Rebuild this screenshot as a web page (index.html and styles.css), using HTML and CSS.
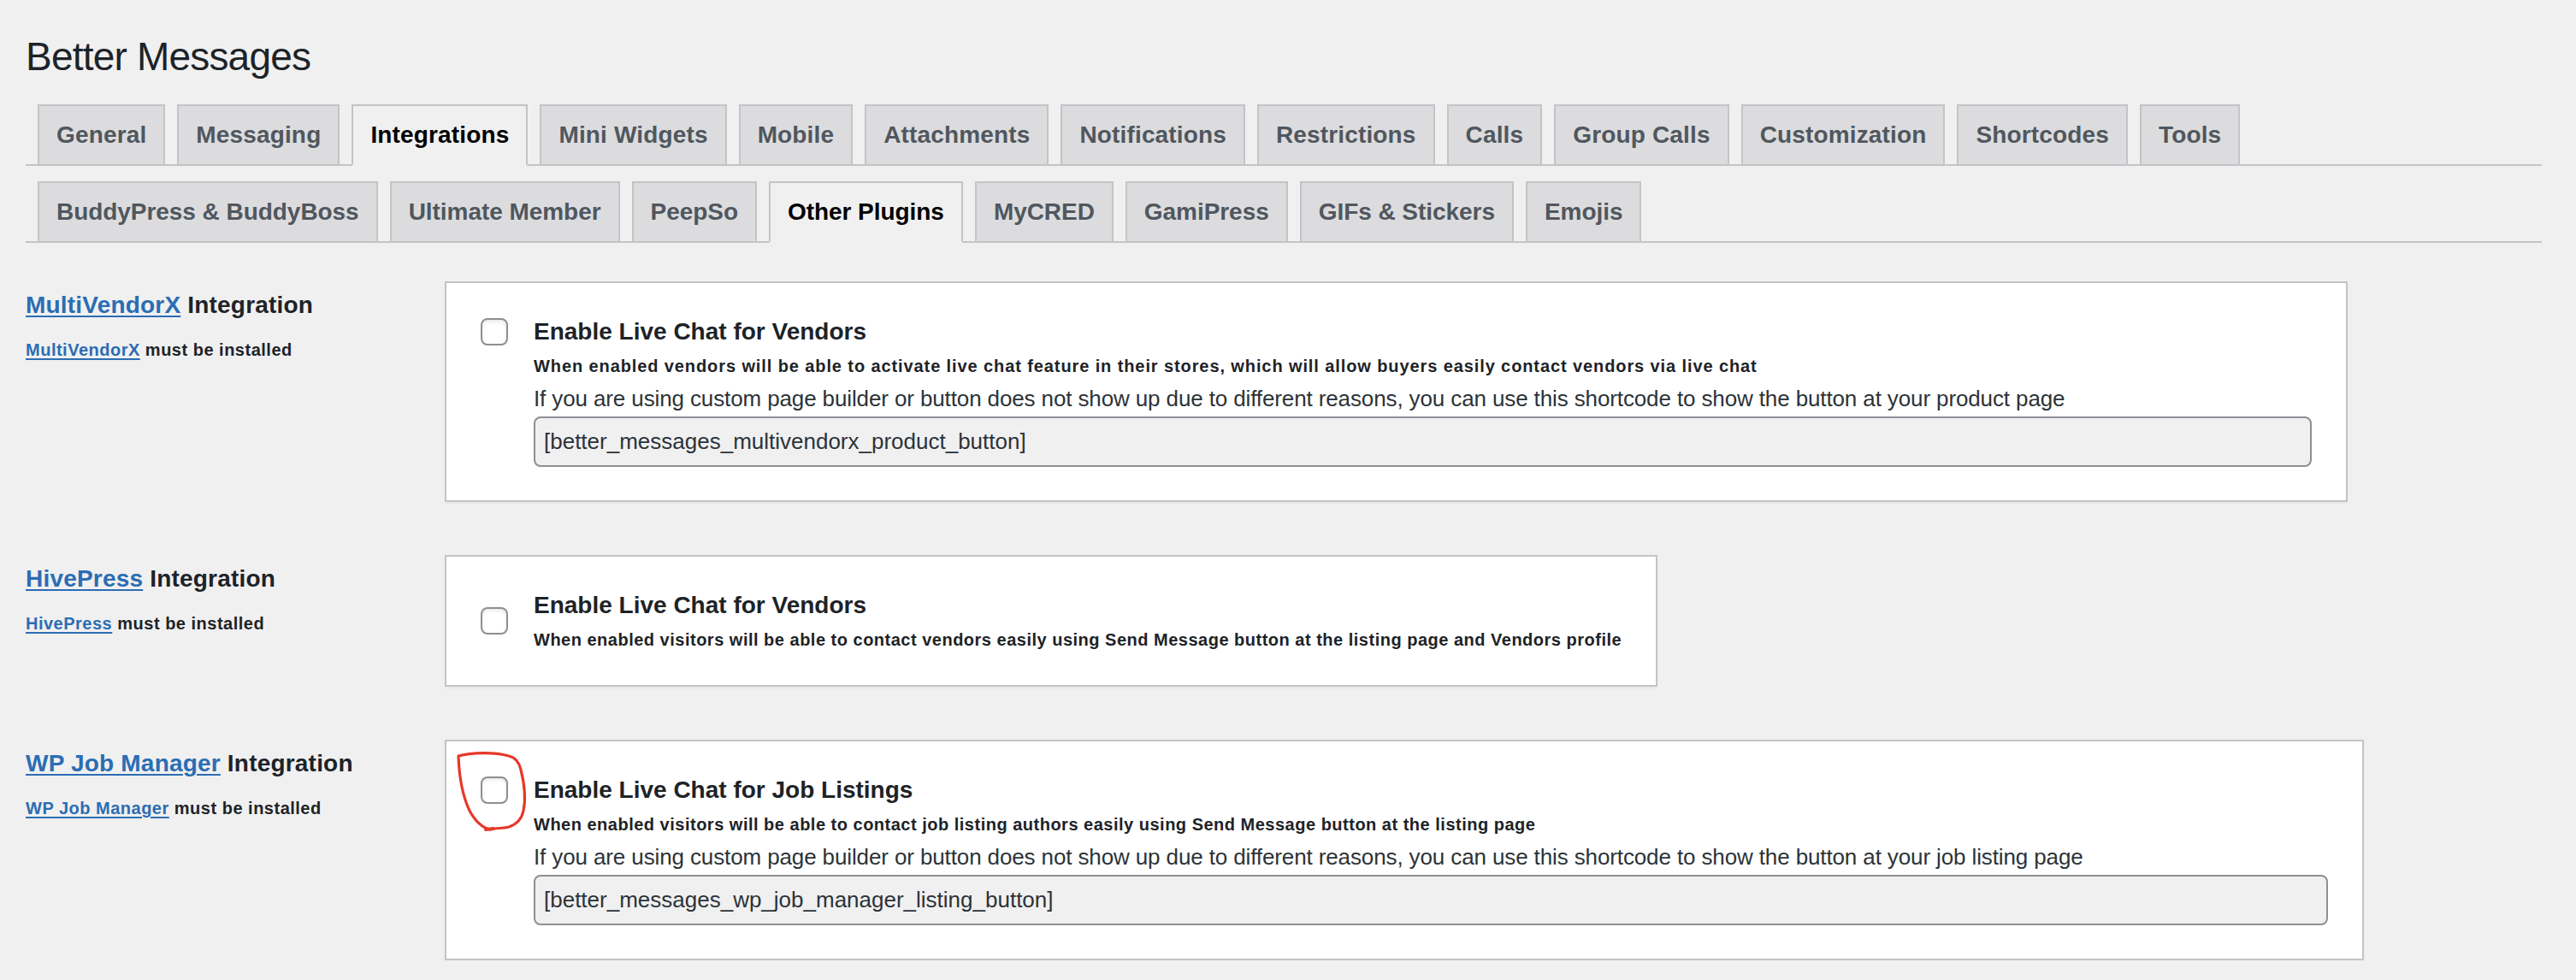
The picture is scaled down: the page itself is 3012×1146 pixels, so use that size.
FILE: index.html
```html
<!DOCTYPE html>
<html lang="en">
<head>
<meta charset="utf-8">
<title>Better Messages</title>
<link rel="stylesheet" href="styles.css">
</head>
<body>
<div class="wrap">
  <h1 class="page-title">Better Messages</h1>

  <nav class="nav-tabs">
    <a class="nav-tab" href="#">General</a>
    <a class="nav-tab" href="#">Messaging</a>
    <a class="nav-tab nav-tab--active" href="#">Integrations</a>
    <a class="nav-tab" href="#">Mini Widgets</a>
    <a class="nav-tab" href="#">Mobile</a>
    <a class="nav-tab" href="#">Attachments</a>
    <a class="nav-tab" href="#">Notifications</a>
    <a class="nav-tab" href="#">Restrictions</a>
    <a class="nav-tab" href="#">Calls</a>
    <a class="nav-tab" href="#">Group Calls</a>
    <a class="nav-tab" href="#">Customization</a>
    <a class="nav-tab" href="#">Shortcodes</a>
    <a class="nav-tab" href="#">Tools</a>
  </nav>

  <nav class="nav-tabs nav-tabs--sub">
    <a class="nav-tab" href="#">BuddyPress &amp; BuddyBoss</a>
    <a class="nav-tab" href="#">Ultimate Member</a>
    <a class="nav-tab" href="#">PeepSo</a>
    <a class="nav-tab nav-tab--active" href="#">Other Plugins</a>
    <a class="nav-tab" href="#">MyCRED</a>
    <a class="nav-tab" href="#">GamiPress</a>
    <a class="nav-tab" href="#">GIFs &amp; Stickers</a>
    <a class="nav-tab" href="#">Emojis</a>
  </nav>

  <div class="settings">
    <section class="integration">
      <div class="integration-label">
        <h2 class="integration-title"><a class="link" href="#">MultiVendorX</a> Integration</h2>
        <p class="integration-req"><a class="link" href="#">MultiVendorX</a> must be installed</p>
      </div>
      <div class="card">
        <div class="option">
          <input class="checkbox" type="checkbox" aria-label="Enable Live Chat for Vendors">
          <div class="option-body">
            <h3 class="option-title">Enable Live Chat for Vendors</h3>
            <p class="option-desc option-desc--loose">When enabled vendors will be able to activate live chat feature in their stores, which will allow buyers easily contact vendors via live chat</p>
            <p class="option-note">If you are using custom page builder or button does not show up due to different reasons, you can use this shortcode to show the button at your product page</p>
            <input class="shortcode shortcode--product" type="text" readonly value="[better_messages_multivendorx_product_button]">
          </div>
        </div>
      </div>
    </section>

    <section class="integration">
      <div class="integration-label">
        <h2 class="integration-title"><a class="link" href="#">HivePress</a> Integration</h2>
        <p class="integration-req"><a class="link" href="#">HivePress</a> must be installed</p>
      </div>
      <div class="card">
        <div class="option option--centered">
          <input class="checkbox" type="checkbox" aria-label="Enable Live Chat for Vendors">
          <div class="option-body">
            <h3 class="option-title">Enable Live Chat for Vendors</h3>
            <p class="option-desc">When enabled visitors will be able to contact vendors easily using Send Message button at the listing page and Vendors profile</p>
          </div>
        </div>
      </div>
    </section>

    <section class="integration">
      <div class="integration-label">
        <h2 class="integration-title"><a class="link" href="#">WP Job Manager</a> Integration</h2>
        <p class="integration-req"><a class="link" href="#">WP Job Manager</a> must be installed</p>
      </div>
      <div class="card">
        <div class="option">
          <input class="checkbox" type="checkbox" aria-label="Enable Live Chat for Job Listings">
          <div class="option-body">
            <h3 class="option-title">Enable Live Chat for Job Listings</h3>
            <p class="option-desc">When enabled visitors will be able to contact job listing authors easily using Send Message button at the listing page</p>
            <p class="option-note">If you are using custom page builder or button does not show up due to different reasons, you can use this shortcode to show the button at your job listing page</p>
            <input class="shortcode shortcode--job" type="text" readonly value="[better_messages_wp_job_manager_listing_button]">
          </div>
        </div>
        <svg class="annotation" viewBox="0 0 92 100" width="92" height="100" aria-hidden="true">
          <path d="M7 8 C22 4, 48 3, 66 8 C74 10, 78 15, 80 24 C84 40, 86 58, 83 72 C81 82, 75 88, 66 91 C58 93, 50 92, 44 94 C36 92, 27 85, 20 72 C13 57, 8 38, 7 8" fill="none" stroke="#e5392a" stroke-width="3.2" stroke-linecap="round" stroke-linejoin="round"/>
          <path d="M39 94 L48 93" fill="none" stroke="#e5392a" stroke-width="4" stroke-linecap="round"/>
        </svg>
      </div>
    </section>
  </div>
</div>
</body>
</html>
```

FILE: styles.css
```css
* {
  box-sizing: border-box;
}

html,
body {
  margin: 0;
  background: #f0f0f1;
}

body {
  font-family: "Liberation Sans", Arial, sans-serif;
  color: #1d2327;
}

.wrap {
  padding: 18px 40px 0 30px;
}

.page-title {
  margin: 0;
  padding: 18px 0 8px;
  font-size: 46px;
  line-height: 60px;
  font-weight: 400;
  letter-spacing: -0.8px;
  color: #1d2327;
}

/* Tabs */
.nav-tabs {
  display: flex;
  align-items: flex-end;
  padding-top: 18px;
  border-bottom: 2px solid #c3c4c7;
}

.nav-tab {
  margin-left: 14px;
  padding: 10px 20px;
  border: 2px solid #c3c4c7;
  border-bottom: 0;
  background: #dcdcde;
  color: #50575e;
  font-size: 28px;
  line-height: 48px;
  font-weight: 700;
  letter-spacing: 0.15px;
  text-decoration: none;
  white-space: nowrap;
}

.nav-tabs--sub .nav-tab {
  letter-spacing: -0.05px;
}

.nav-tab--active {
  background: #f0f0f1;
  color: #000;
  border-bottom: 2px solid #f0f0f1;
  margin-bottom: -2px;
}

/* Settings */
.settings {
  display: flex;
  flex-direction: column;
  gap: 62px;
  padding-top: 45px;
}

.integration {
  display: flex;
  align-items: flex-start;
}

.integration-label {
  flex: 0 0 490px;
  padding-top: 10px;
}

.integration-title {
  margin: 0;
  font-size: 28px;
  line-height: 36px;
  font-weight: 700;
  letter-spacing: 0.2px;
  color: #1d2327;
}

.integration-req {
  margin: 20px 0 0;
  font-size: 20px;
  line-height: 28px;
  font-weight: 700;
  letter-spacing: 0.5px;
  color: #1d2327;
}

.link {
  color: #2b6db3;
  text-decoration: underline;
  text-decoration-thickness: 2px;
  text-underline-offset: 3px;
}

.card {
  position: relative;
  background: #fff;
  border: 2px solid #c3c4c7;
  box-shadow: 0 2px 2px rgba(0, 0, 0, 0.04);
  padding: 39px 40px;
}

.option {
  display: flex;
  align-items: flex-start;
  gap: 30px;
}

.checkbox {
  appearance: none;
  -webkit-appearance: none;
  flex: none;
  width: 32px;
  height: 32px;
  margin: 2px 0 0;
  border: 2px solid #8c8f94;
  border-radius: 8px;
  background: #fff;
  box-shadow: inset 0 2px 4px rgba(0, 0, 0, 0.1);
}

.option--centered .checkbox {
  align-self: center;
  margin-top: 0;
}

.option-title {
  margin: 0;
  font-size: 28px;
  line-height: 36px;
  font-weight: 700;
  color: #1d2327;
}

.option-desc {
  margin: 8px 0 0;
  font-size: 20px;
  line-height: 28px;
  font-weight: 700;
  letter-spacing: 0.5px;
  color: #1d2327;
}

.option-desc--loose {
  letter-spacing: 0.9px;
}

.option-note {
  margin: 6px 0 0;
  font-size: 26px;
  line-height: 36px;
  letter-spacing: -0.12px;
  color: #2c3338;
}

.shortcode {
  display: block;
  margin: 3px 0 0;
  height: 59px;
  padding: 0 10px;
  border: 2px solid #8c8f94;
  border-radius: 8px;
  background: #f0f0f1;
  font-family: "Liberation Sans", Arial, sans-serif;
  font-size: 26px;
  color: #2c3338;
}

.shortcode--product {
  width: 2079px;
}

.shortcode--job {
  width: 2098px;
}

.annotation {
  position: absolute;
  left: 7px;
  top: 9px;
  pointer-events: none;
}
```
